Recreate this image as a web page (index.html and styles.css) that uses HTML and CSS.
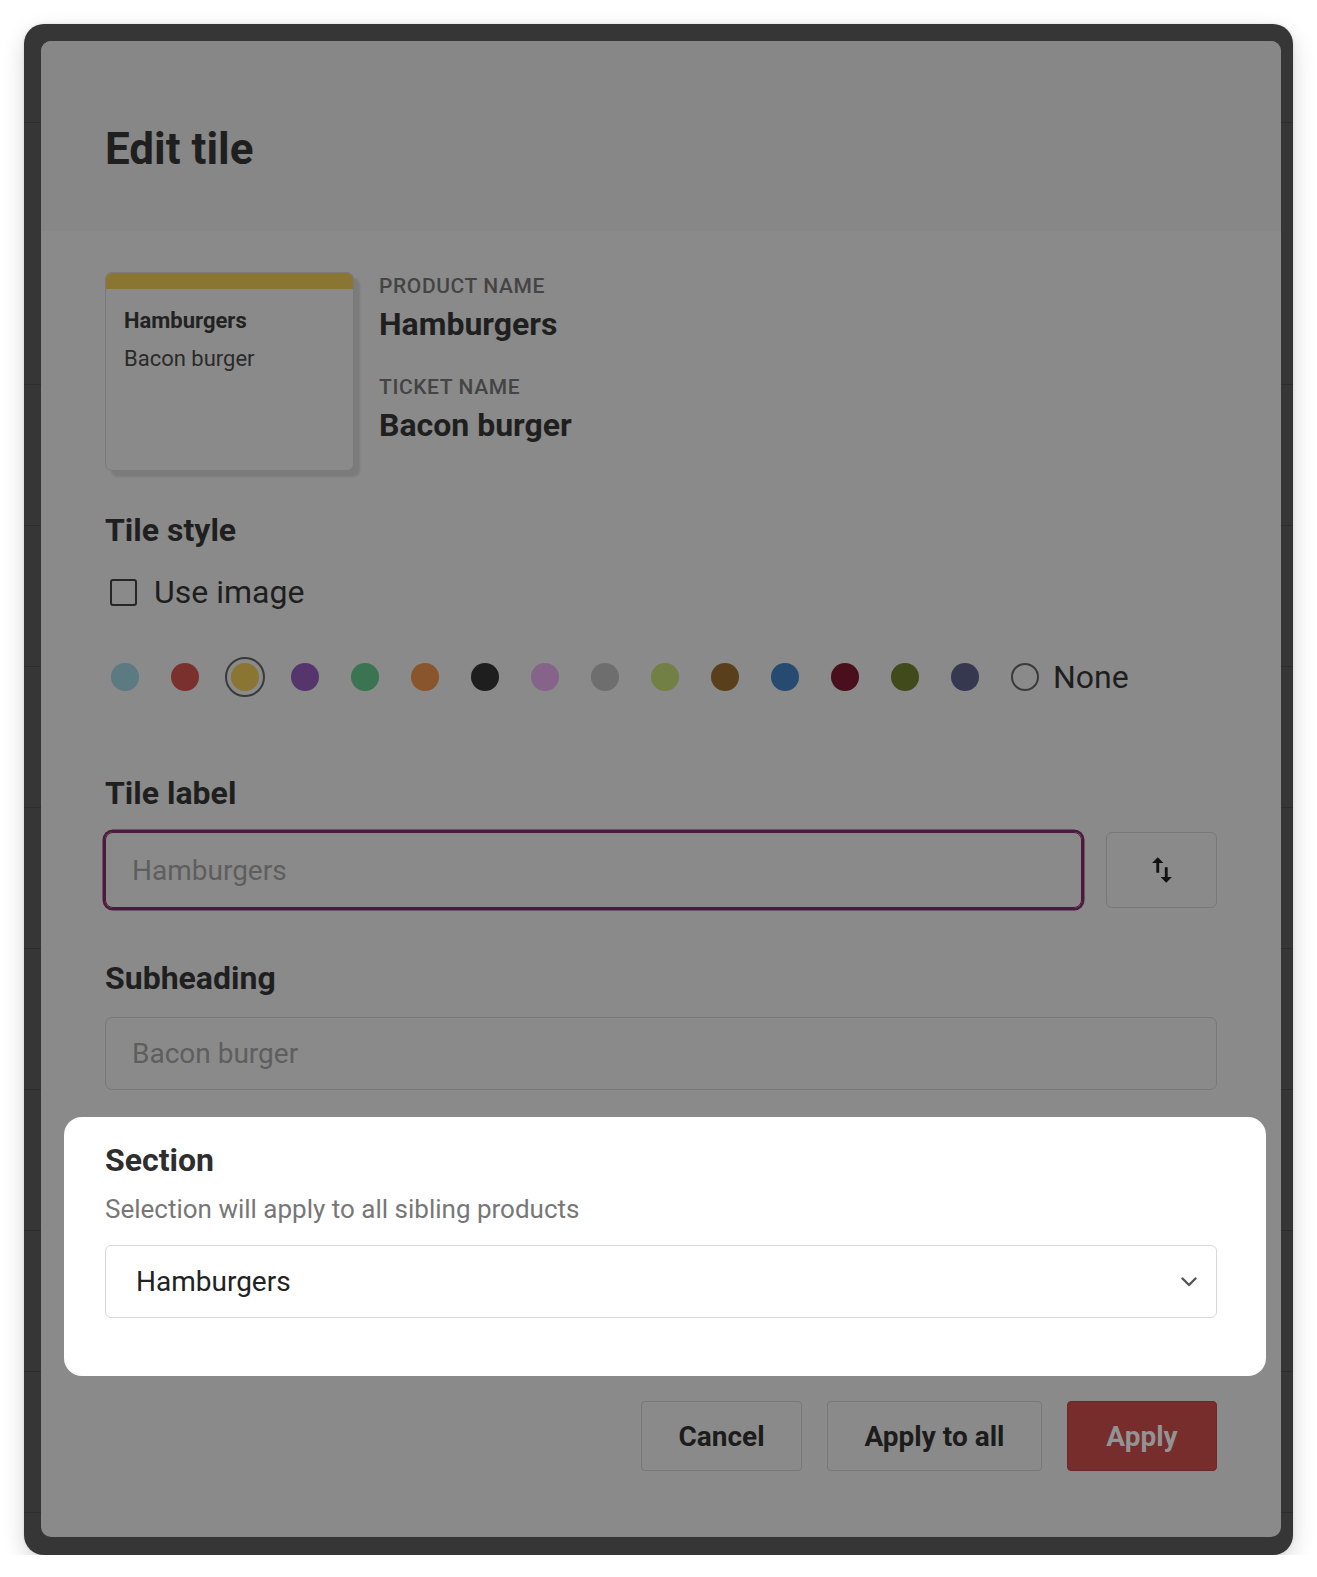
FILE: index.html
```html
<!DOCTYPE html>
<html lang="en">
<head>
<meta charset="utf-8">
<title>Edit tile</title>
<link rel="stylesheet" href="styles.css">
</head>
<body>
<div class="frame">
  <div class="modal">
    <header class="modal-header">
      <h1 class="modal-title">Edit tile</h1>
    </header>
    <div class="modal-body">
      <div class="preview-row">
        <div class="tile-card">
          <div class="tile-bar"></div>
          <div class="tile-content">
            <div class="tile-name">Hamburgers</div>
            <div class="tile-sub">Bacon burger</div>
          </div>
        </div>
        <div class="tile-info">
          <div class="info-label">PRODUCT NAME</div>
          <div class="info-value">Hamburgers</div>
          <div class="info-label info-gap">TICKET NAME</div>
          <div class="info-value">Bacon burger</div>
        </div>
      </div>

      <h2 class="field-title style-title">Tile style</h2>
      <label class="check-row">
        <span class="checkbox"></span>
        <span class="check-text">Use image</span>
      </label>

      <div class="swatches">
        <span class="swatch"><span class="dot" style="background:#5b7a81"></span></span>
        <span class="swatch"><span class="dot" style="background:#7a302c"></span></span>
        <span class="swatch selected"><span class="dot" style="background:#8a7533"></span></span>
        <span class="swatch"><span class="dot" style="background:#55356b"></span></span>
        <span class="swatch"><span class="dot" style="background:#3a7452"></span></span>
        <span class="swatch"><span class="dot" style="background:#88552c"></span></span>
        <span class="swatch"><span class="dot" style="background:#1e1e1e"></span></span>
        <span class="swatch"><span class="dot" style="background:#86648a"></span></span>
        <span class="swatch"><span class="dot" style="background:#6e6e6e"></span></span>
        <span class="swatch"><span class="dot" style="background:#727f45"></span></span>
        <span class="swatch"><span class="dot" style="background:#5a3f1c"></span></span>
        <span class="swatch"><span class="dot" style="background:#264a70"></span></span>
        <span class="swatch"><span class="dot" style="background:#4a0f1c"></span></span>
        <span class="swatch"><span class="dot" style="background:#414a1a"></span></span>
        <span class="swatch"><span class="dot" style="background:#36384f"></span></span>
        <span class="none-option"><span class="radio"></span><span class="none-text">None</span></span>
      </div>

      <h2 class="field-title label-title">Tile label</h2>
      <div class="input-row">
        <div class="text-input focused"><span class="placeholder">Hamburgers</span></div>
        <button class="swap-btn" type="button" aria-label="Swap">
          <svg width="34" height="34" viewBox="0 0 24 24"><path d="M16 17.01V10h-2v7.01h-3L15 21l4-3.99h-3zM9 3L5 6.99h3V14h2V6.99h3L9 3z" fill="#111"/></svg>
        </button>
      </div>

      <h2 class="field-title sub-title">Subheading</h2>
      <div class="text-input sub-input"><span class="placeholder">Bacon burger</span></div>

      <section class="spotlight">
        <h2 class="section-title">Section</h2>
        <p class="section-help">Selection will apply to all sibling products</p>
        <div class="select">
          <span class="select-value">Hamburgers</span>
          <svg class="chevron" width="16" height="10" viewBox="0 0 16 10"><path d="M1.5 1.5 L8 8 L14.5 1.5" fill="none" stroke="#555" stroke-width="2.4" stroke-linecap="round" stroke-linejoin="round"/></svg>
        </div>
      </section>

      <div class="actions">
        <button class="btn btn-outline btn-cancel" type="button">Cancel</button>
        <button class="btn btn-outline btn-all" type="button">Apply to all</button>
        <button class="btn btn-primary" type="button">Apply</button>
      </div>
    </div>
  </div>
</div>
</body>
</html>
```

FILE: styles.css
```css
* { box-sizing: border-box; }

html, body {
  margin: 0;
  padding: 0;
  background: #ffffff;
  font-family: Roboto, "Liberation Sans", Arial, sans-serif;
}

.frame {
  margin: 24px 24px 0 24px;
  padding: 17px 12px 18px 17px;
  border-radius: 20px;
  background-color: #363636;
  background-image: repeating-linear-gradient(to bottom, transparent 0, transparent 140px, #2d2d2d 140px, #2d2d2d 141px);
  background-position: 0 220px;
  box-shadow: 0 8px 22px rgba(0, 0, 0, 0.16), 0 0 3px rgba(0, 0, 0, 0.12);
}

.modal {
  background: #8a8a8a;
  border-radius: 10px;
  overflow: hidden;
}

.modal-header {
  background: #878787;
  padding: 82px 64px 56px;
}

.modal-title {
  margin: 0;
  font-size: 44px;
  line-height: 52px;
  font-weight: 700;
  color: #1f1f1f;
}

.modal-body {
  padding: 41px 64px 66px;
}

/* preview */
.preview-row {
  display: flex;
  align-items: flex-start;
  gap: 25px;
}

.tile-card {
  width: 249px;
  height: 199px;
  border: 1px solid #7a7a7a;
  border-radius: 7px;
  overflow: hidden;
  box-shadow: 6px 6px 2px rgba(0, 0, 0, 0.1);
  background: #8a8a8a;
}

.tile-bar {
  height: 16px;
  background: #8a7533;
}

.tile-content {
  padding: 19px 18px 0;
}

.tile-name {
  font-size: 22px;
  line-height: 26px;
  font-weight: 700;
  color: #222;
}

.tile-sub {
  margin-top: 12px;
  font-size: 22px;
  line-height: 26px;
  color: #2a2a2a;
}

.tile-info {
  padding-top: 2px;
}

.info-label {
  font-size: 21px;
  line-height: 24px;
  font-weight: 500;
  color: #444444;
  letter-spacing: 0.6px;
}

.info-gap {
  margin-top: 33px;
}

.info-value {
  margin-top: 8px;
  font-size: 32px;
  line-height: 36px;
  font-weight: 700;
  color: #1f1f1f;
}

/* field titles */
.field-title {
  margin: 0;
  font-size: 32px;
  line-height: 36px;
  font-weight: 700;
  color: #1f1f1f;
}

.style-title { margin-top: 41px; }
.label-title { margin-top: 78px; }
.sub-title { margin-top: 52px; }

/* checkbox */
.check-row {
  margin-top: 26px;
  height: 36px;
  display: flex;
  align-items: center;
  gap: 17px;
}

.checkbox {
  width: 27px;
  height: 27px;
  margin-left: 5px;
  border: 2.6px solid #262626;
  border-radius: 3px;
}

.check-text {
  font-size: 32px;
  color: #1e1e1e;
}

/* swatches */
.swatches {
  margin-top: 47px;
  display: flex;
  align-items: center;
  gap: 20px;
  height: 40px;
}

.swatch {
  width: 40px;
  height: 40px;
  display: flex;
  align-items: center;
  justify-content: center;
  border-radius: 50%;
}

.swatch.selected {
  border: 2px solid #3a3a3a;
}

.dot {
  width: 28px;
  height: 28px;
  border-radius: 50%;
}

.none-option {
  display: flex;
  align-items: center;
  gap: 14px;
}

.radio {
  width: 28px;
  height: 28px;
  margin-left: 6px;
  border: 2.5px solid #3a3a3a;
  border-radius: 50%;
}

.none-text {
  font-size: 32px;
  color: #1e1e1e;
}

/* inputs */
.input-row {
  margin-top: 21px;
  display: flex;
  gap: 24px;
}

.text-input {
  height: 76px;
  flex: 1;
  display: flex;
  align-items: center;
  padding: 0 26px;
  border: 1.5px solid #787878;
  border-radius: 7px;
}

.text-input.focused {
  border: 1px solid #4b1a3e;
  box-shadow: 0 0 0 2.5px #4b1a3e;
  border-radius: 8px;
}

.placeholder {
  font-size: 28px;
  color: #5e5e5e;
}

.swap-btn {
  width: 111px;
  height: 76px;
  border: 1.5px solid #787878;
  border-radius: 6px;
  background: transparent;
  display: flex;
  align-items: center;
  justify-content: center;
  padding: 0;
}

.sub-input {
  margin-top: 21px;
  height: 73px;
}

/* spotlight section */
.spotlight {
  margin: 27px -49px 0 -41px;
  padding: 25px 49px 58px 41px;
  background: #ffffff;
  border-radius: 18px;
}

.section-title {
  margin: 0;
  font-size: 32px;
  line-height: 36px;
  font-weight: 700;
  color: #2e2e2e;
}

.section-help {
  margin: 16px 0 0;
  font-size: 26px;
  line-height: 30px;
  color: #777777;
}

.select {
  margin-top: 21px;
  height: 73px;
  display: flex;
  align-items: center;
  justify-content: space-between;
  padding: 0 19px 0 30px;
  border: 1.5px solid #d8d8d8;
  border-radius: 6px;
}

.select-value {
  font-size: 28px;
  color: #222;
}

/* actions */
.actions {
  margin-top: 25px;
  display: flex;
  justify-content: flex-end;
  gap: 25px;
}

.btn {
  height: 70px;
  border-radius: 4px;
  font-family: Roboto, "Liberation Sans", Arial, sans-serif;
  font-size: 28px;
  font-weight: 700;
  padding: 0;
}

.btn-outline {
  background: transparent;
  border: 1.5px solid #787878;
  color: #1c1c1c;
}

.btn-cancel { width: 161px; }
.btn-all { width: 215px; }

.btn-primary {
  width: 150px;
  background: #772d2b;
  border: 1.5px solid #6e2826;
  color: #939393;
}
```
